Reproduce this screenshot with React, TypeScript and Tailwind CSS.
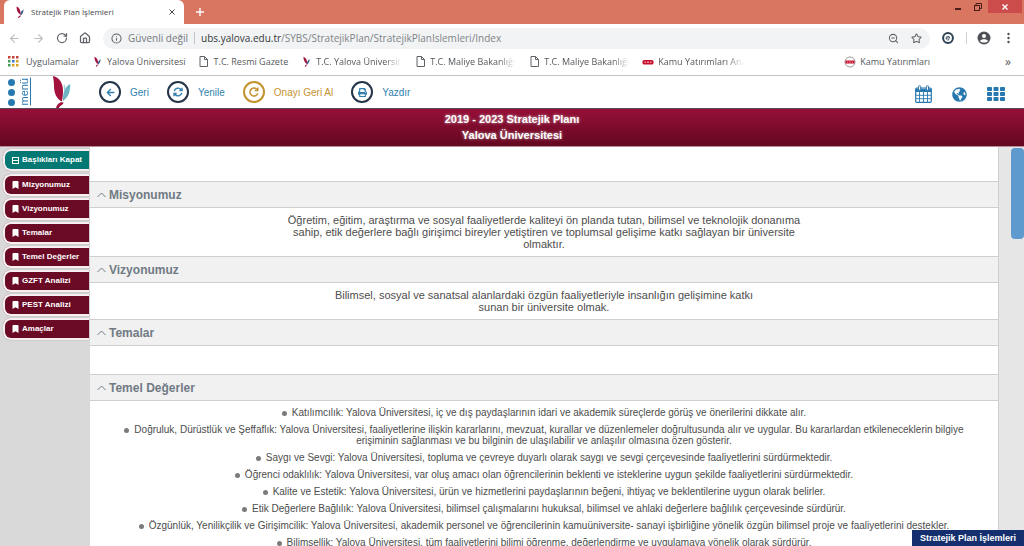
import React, { useState } from 'react';
import { FaArrowLeft, FaBookmark, FaPrint, FaGlobeAmericas } from 'react-icons/fa';
import { ArrowLeft, ArrowRight, House, Info, RotateCw, Star, ZoomOut } from 'lucide-react';

type BookmarkIcon = 'yalova' | 'page' | 'badge' | 'badgeRound';

interface Bookmark {
  icon: BookmarkIcon;
  label: string;
  fade?: boolean;
  className?: string;
}

interface PlanSection {
  title: string;
  text?: string;
  textClass?: string;
  items?: string[];
}

const bookmarks: Bookmark[] = [
  { icon: 'yalova', label: 'Yalova Üniversitesi' },
  { icon: 'page', label: 'T.C. Resmi Gazete' },
  { icon: 'yalova', label: 'T.C. Yalova Üniversite', fade: true },
  { icon: 'page', label: 'T.C. Maliye Bakanlığı', fade: true },
  { icon: 'page', label: 'T.C. Maliye Bakanlığı', fade: true },
  { icon: 'badge', label: 'Kamu Yatırımları Ana', fade: true },
  { icon: 'badgeRound', label: 'Kamu Yatırımları', className: 'ml-[88px]' },
];

const menuItems = ['Mizyonumuz', 'Vizyonumuz', 'Temalar', 'Temel Değerler', 'GZFT Analizi', 'PEST Analizi', 'Amaçlar'];

const sections: PlanSection[] = [
  {
    title: 'Misyonumuz',
    text: 'Öğretim, eğitim, araştırma ve sosyal faaliyetlerde kaliteyi ön planda tutan, bilimsel ve teknolojik donanıma sahip, etik değerlere bağlı girişimci bireyler yetiştiren ve toplumsal gelişime katkı sağlayan bir üniversite olmaktır.',
    textClass: 'max-w-[520px]',
  },
  {
    title: 'Vizyonumuz',
    text: 'Bilimsel, sosyal ve sanatsal alanlardaki özgün faaliyetleriyle insanlığın gelişimine katkı sunan bir üniversite olmak.',
    textClass: 'max-w-[430px]',
  },
  { title: 'Temalar' },
  {
    title: 'Temel Değerler',
    items: [
      'Katılımcılık: Yalova Üniversitesi, iç ve dış paydaşlarının idari ve akademik süreçlerde görüş ve önerilerini dikkate alır.',
      'Doğruluk, Dürüstlük ve Şeffaflık: Yalova Üniversitesi, faaliyetlerine ilişkin kararlarını, mevzuat, kurallar ve düzenlemeler doğrultusunda alır ve uygular. Bu kararlardan etkileneceklerin bilgiye erişiminin sağlanması ve bu bilginin de ulaşılabilir ve anlaşılır olmasına özen gösterir.',
      'Saygı ve Sevgi: Yalova Üniversitesi, topluma ve çevreye duyarlı olarak saygı ve sevgi çerçevesinde faaliyetlerini sürdürmektedir.',
      'Öğrenci odaklılık: Yalova Üniversitesi, var oluş amacı olan öğrencilerinin beklenti ve isteklerine uygun şekilde faaliyetlerini sürdürmektedir.',
      'Kalite ve Estetik: Yalova Üniversitesi, ürün ve hizmetlerini paydaşlarının beğeni, ihtiyaç ve beklentilerine uygun olarak belirler.',
      'Etik Değerlere Bağlılık: Yalova Üniversitesi, bilimsel çalışmalarını hukuksal, bilimsel ve ahlaki değerlere bağlılık çerçevesinde sürdürür.',
      'Özgünlük, Yenilikçilik ve Girişimcilik: Yalova Üniversitesi, akademik personel ve öğrencilerinin kamuüniversite- sanayi işbirliğine yönelik özgün bilimsel proje ve faaliyetlerini destekler.',
      'Bilimsellik: Yalova Üniversitesi, tüm faaliyetlerini bilimi öğrenme, değerlendirme ve uygulamaya yönelik olarak sürdürür.',
    ],
  },
];

function YalovaLogo({ className }: { className: string }) {
  return (
    <svg viewBox="0 0 18 32" className={className} aria-hidden="true">
      <path d="M0.300 0 C7 1.500 10.500 7 10.500 15 C10.500 19 10 22 9.500 25.500 C4 23 1.500 17 1.500 10 C1.500 6 1 3 0.300 0 Z" fill="#a3123c" />
      <path d="M17.700 8 C18 16 15.500 21.500 10.500 25 C10 17 12.500 10 17.700 8 Z" fill="#6db5c4" />
      <path d="M11.500 8 C12.800 10 12.800 12 11.800 15 C11.300 12 11 10 11.500 8 Z" fill="#8fc6d2" />
      <path d="M3.500 32 C4.500 28 7.500 25.500 11 26.500 C10.500 29.500 7.500 29 6.500 32 Z" fill="#a3123c" />
    </svg>
  );
}

function Favicon({ className }: { className: string }) {
  return (
    <svg viewBox="0 0 8 12" className={className} aria-hidden="true">
      <path d="M0.500 0.500 C3.500 1.500 4.800 4.500 4.800 9 C2 7.500 0.500 4.500 0.500 0.500 Z" fill="#a3123c" />
      <path d="M7.500 3.500 C7.500 6.500 6.500 8.500 4.500 9.500 C4.200 6.500 5.500 4.500 7.500 3.500 Z" fill="#3e5f8f" />
      <path d="M2 12 C2.500 10 3.500 9.300 5 9.500 C4.800 10.800 3.500 10.500 3 12 Z" fill="#a3123c" />
    </svg>
  );
}

function BookmarkGlyph({ icon }: { icon: BookmarkIcon }) {
  switch (icon) {
    case 'yalova':
      return <Favicon className="h-[11px] w-[7px]" />;
    case 'page':
      return (
        <svg viewBox="0 0 9 11" className="h-[11px] w-[9px]" fill="none" stroke="#5f6368" aria-hidden="true">
          <path d="M1 0.500 H5.500 L8.500 3.500 V10.500 H1 Z" />
          <path d="M5.500 0.500 V3.500 H8.500" />
        </svg>
      );
    case 'badge':
      return (
        <svg viewBox="0 0 12 12" className="size-3" aria-hidden="true">
          <rect x="0.500" y="4" width="11" height="4.500" rx="1.500" fill="#c8102e" />
          <path d="M2.500 6.200 h1.500 M5 6.200 h2 M8 6.200 h1.500" stroke="#fff" strokeWidth="0.800" />
        </svg>
      );
    default:
      return (
        <svg viewBox="0 0 12 12" className="size-3" aria-hidden="true">
          <circle cx="6" cy="6" r="5" fill="#fff" stroke="#8a8a8a" strokeWidth="0.900" />
          <rect x="1.500" y="4.500" width="9" height="3" fill="#c8102e" />
          <path d="M3 6 h1.200 M5.200 6 h1.600 M7.800 6 h1.200" stroke="#fff" strokeWidth="0.600" />
        </svg>
      );
  }
}

function TitleBar() {
  return (
    <div className="flex h-6 justify-between bg-[#d97662] pl-1">
      <div className="flex">
        <div className="flex w-[180px] items-center rounded-t-md bg-white pr-1 pl-3">
          <Favicon className="h-3 w-2" />
          <span className="ml-[7px] flex-1 whitespace-nowrap text-[8px] text-[#45484c]">Stratejik Plan İşlemleri</span>
          <button aria-label="Sekmeyi kapat" className="flex size-4 items-center justify-center">
            <svg viewBox="0 0 6 6" className="size-[6px]" stroke="#45484c" aria-hidden="true">
              <path d="M0.500 0.500 L5.500 5.500 M5.500 0.500 L0.500 5.500" />
            </svg>
          </button>
        </div>
        <button aria-label="Yeni sekme" className="ml-2 flex w-4 items-center justify-center">
          <svg viewBox="0 0 8 8" className="size-2" stroke="#fff" strokeWidth="1.400" aria-hidden="true">
            <path d="M4 0 V8 M0 4 H8" />
          </svg>
        </button>
      </div>
      <div className="flex h-[13px] items-center pr-[2px]">
        <button aria-label="Simge durumuna küçült" className="flex h-full w-5 items-center justify-center">
          <span className="mt-1 h-[2px] w-[6px] bg-[#4a1d18]" />
        </button>
        <button aria-label="Önceki boyut" className="flex h-full w-5 items-center justify-center">
          <svg viewBox="0 0 8 8" className="size-2" fill="none" stroke="#4a1d18" aria-hidden="true">
            <path d="M2 2 V0.500 H7.500 V5.500 H6" />
            <rect x="0.500" y="2.500" width="5" height="5" />
          </svg>
        </button>
        <button aria-label="Kapat" className="flex h-full w-[34px] items-center justify-center bg-[#cc4b4b]">
          <svg viewBox="0 0 6 6" className="size-[6px]" stroke="#fff" strokeWidth="1.400" aria-hidden="true">
            <path d="M0.500 0.500 L5.500 5.500 M5.500 0.500 L0.500 5.500" />
          </svg>
        </button>
      </div>
    </div>
  );
}

function AddressBar() {
  return (
    <div className="flex h-7 items-center bg-white pl-2 text-[#5f6368]">
      <div className="flex items-center gap-[11px]">
        <button aria-label="Geri git" className="text-[#babcbe]"><ArrowLeft size={13} strokeWidth={2} /></button>
        <button aria-label="İleri git" className="text-[#babcbe]"><ArrowRight size={13} strokeWidth={2} /></button>
        <button aria-label="Sayfayı yenile"><RotateCw size={12} strokeWidth={2.5} /></button>
        <button aria-label="Ana sayfa"><House size={12} strokeWidth={2.5} /></button>
      </div>
      <div className="ml-3 flex h-[21px] flex-1 items-center rounded-full bg-[#f1f3f4] pr-2 pl-2 text-[10px]">
        <Info size={11} strokeWidth={2.2} />
        <span className="ml-[6px] border-r border-[#c3c5c8] pr-[6px] leading-3 text-[#75797d]">Güvenli değil</span>
        <label htmlFor="url" className="ml-[6px] text-[#35373a]">ubs.yalova.edu.tr</label>
        <input
          id="url"
          className="min-w-0 flex-1 bg-transparent text-[#7f8387] outline-none"
          defaultValue="/SYBS/StratejikPlan/StratejikPlanIslemleri/Index"
        />
        <button aria-label="Yakınlaştırma"><ZoomOut size={11} strokeWidth={2.2} /></button>
        <button aria-label="Yer işareti ekle" className="ml-3"><Star size={11} strokeWidth={2.2} /></button>
      </div>
      <button aria-label="Uzantı" className="ml-3">
        <svg viewBox="0 0 12 12" className="size-3" aria-hidden="true">
          <circle cx="6" cy="6" r="4.900" fill="#fff" stroke="#2c4257" strokeWidth="2" />
          <path d="M4.300 6 H7.700 A1.800 1.800 0 1 0 7.200 7.400" fill="none" stroke="#2c4257" strokeWidth="0.900" />
        </svg>
      </button>
      <span className="ml-3 h-3 w-px bg-[#cfd1d4]" />
      <button aria-label="Profil" className="ml-[10px]">
        <svg viewBox="0 0 14 14" className="size-[14px]" aria-hidden="true">
          <circle cx="7" cy="7" r="6.500" fill="#4d5156" />
          <circle cx="7" cy="5" r="2" fill="#fff" />
          <path d="M3 10 C4 7.600 10 7.600 11 10 C9.500 12 4.500 12 3 10 Z" fill="#fff" />
        </svg>
      </button>
      <button aria-label="Diğer" className="mr-[14px] ml-4">
        <svg viewBox="0 0 3 12" className="h-3 w-[3px]" fill="#4d5156" aria-hidden="true">
          <circle cx="1.500" cy="2" r="1.200" />
          <circle cx="1.500" cy="6" r="1.200" />
          <circle cx="1.500" cy="10" r="1.200" />
        </svg>
      </button>
    </div>
  );
}

function AppsGlyph() {
  const colors = ['#c5443a', '#c5443a', '#c5443a', '#4b9b58', '#3f78c9', '#d9a521', '#4b9b58', '#d9a521', '#d9a521'];
  return (
    <svg viewBox="0 0 11 11" className="size-[11px]" aria-hidden="true">
      {colors.map((c, i) => (
        <rect key={i} x={(i % 3) * 4} y={Math.floor(i / 3) * 4} width="2.500" height="2.500" fill={c} />
      ))}
    </svg>
  );
}

function BookmarksBar() {
  return (
    <nav className="flex h-6 items-center gap-3 border-b border-[#c4c4c6] bg-white pb-1 pl-2 text-[9px] whitespace-nowrap text-[#55585c]">
      <a href="#uygulamalar" className="flex items-center gap-[7px]">
        <AppsGlyph />
        Uygulamalar
      </a>
      {bookmarks.map((b, i) => (
        <a key={i} href="#bookmark" className={`flex items-center gap-1 ${b.className ?? ''}`}>
          <span className="flex w-3 shrink-0 justify-center">
            <BookmarkGlyph icon={b.icon} />
          </span>
          <span className={b.fade ? 'w-[86px] [mask-image:linear-gradient(to_right,black_80%,transparent)]' : ''}>
            {b.label}
          </span>
        </a>
      ))}
      <button aria-label="Diğer yer işaretleri" className="mr-[13px] ml-auto text-[12px] leading-3">»</button>
    </nav>
  );
}

interface RoundButtonProps {
  label: string;
  gold?: boolean;
  children: React.ReactNode;
}

function RoundButton({ label, gold, children }: RoundButtonProps) {
  return (
    <button className={`flex items-center gap-[9px] ${gold ? 'text-[#c4922f]' : 'text-[#2f7fae]'}`}>
      <span
        className={`flex size-[22px] items-center justify-center rounded-full border-2 ${
          gold ? 'border-[#c4922f]' : 'border-[#24344a]'
        }`}
      >
        {children}
      </span>
      {label}
    </button>
  );
}

function AppToolbar() {
  return (
    <header className="flex h-[33px] shrink-0 items-center border-b border-[#5a4a5e] bg-white pr-[19px] pl-2 text-[10px] text-[#2878b0]">
      <button className="flex items-center gap-1">
        <span className="flex flex-col gap-[3px]">
          <span className="size-[7px] rounded-full bg-[#2878b0]" />
          <span className="size-[7px] rounded-full bg-[#2878b0]" />
          <span className="size-[7px] rounded-full bg-[#2878b0]" />
        </span>
        <span className="rotate-180 border-l border-[#2878b0] text-[11px] leading-[11px] [writing-mode:vertical-rl]">menü</span>
      </button>
      <YalovaLogo className="ml-[21px] h-8 w-[19px]" />
      <div className="ml-7 flex gap-[18px]">
        <RoundButton label="Geri">
          <FaArrowLeft size={9} />
        </RoundButton>
        <RoundButton label="Yenile">
          <svg viewBox="0 0 10 10" className="size-[10px]" fill="none" stroke="currentColor" strokeWidth="1.400" aria-hidden="true">
            <path d="M1.200 4.200 A3.900 3.900 0 0 1 8 2.500 M9 0.800 V3.500 H6.300" />
            <path d="M8.800 5.800 A3.900 3.900 0 0 1 2 7.500 M1 9.200 V6.500 H3.700" />
          </svg>
        </RoundButton>
        <RoundButton label="Onayı Geri Al" gold>
          <svg viewBox="0 0 10 10" className="size-[10px]" fill="none" stroke="currentColor" strokeWidth="1.500" aria-hidden="true">
            <path d="M8.800 6.200 A4 4 0 1 1 7.800 2.200 M8.800 0.500 V3.500 H5.800" />
          </svg>
        </RoundButton>
        <RoundButton label="Yazdır">
          <FaPrint size={9} />
        </RoundButton>
      </div>
      <div className="ml-auto flex items-center gap-5 pt-1">
        <button aria-label="Takvim">
          <svg viewBox="0 0 17 18" className="h-[18px] w-[17px]" fill="none" stroke="currentColor" aria-hidden="true">
            <rect x="0.700" y="3" width="15.600" height="14.300" rx="1" strokeWidth="1.200" />
            <path d="M1 4.200 H16 V6.500 H1 Z" fill="currentColor" />
            <path d="M4.500 7 V17 M8.500 7 V17 M12.500 7 V17 M1 10.300 H16 M1 13.700 H16" strokeWidth="0.900" />
            <rect x="3.500" y="0.700" width="2.200" height="4.500" rx="1" fill="#fff" />
            <rect x="11.300" y="0.700" width="2.200" height="4.500" rx="1" fill="#fff" />
          </svg>
        </button>
        <button aria-label="Dil">
          <FaGlobeAmericas size={15} />
        </button>
        <button aria-label="Modüller">
          <svg viewBox="0 0 18 14" className="h-[14px] w-[18px]" fill="currentColor" aria-hidden="true">
            {[0, 1, 2].map((r) =>
              [0, 1, 2].map((c) => (
                <rect key={`${r}${c}`} x={c * 6.500} y={r * 5} width="5" height="4" rx="0.800" />
              ))
            )}
          </svg>
        </button>
      </div>
    </header>
  );
}

function SideMenu({ onToggleAll }: { onToggleAll: () => void }) {
  const itemClass =
    'flex h-[22px] items-center gap-[3px] rounded-l-lg border-2 border-r-0 border-[#f6eef0] pl-[7px] whitespace-nowrap text-white shadow-[0_0_1px_rgba(110,60,80,0.7)]';
  return (
    <aside className="flex w-[90px] shrink-0 flex-col gap-[2px] bg-[#d9d9d9] pt-[2px] pr-px pl-[3px] text-[8px] font-bold">
      <button className={`${itemClass} mb-px bg-[#047873]`} onClick={onToggleAll}>
        <svg viewBox="0 0 7 7" className="size-[7px]" fill="none" stroke="#fff" aria-hidden="true">
          <rect x="0.500" y="0.500" width="6" height="6" />
          <path d="M0.500 3.500 H6.500" />
        </svg>
        Başlıkları Kapat
      </button>
      {menuItems.map((m) => (
        <a key={m} href={`#${m}`} className={`${itemClass} bg-[#6b0a25]`}>
          <FaBookmark size={8} className="w-[7px]" />
          {m}
        </a>
      ))}
    </aside>
  );
}

interface SectionProps {
  section: PlanSection;
  open: boolean;
  onToggle: () => void;
}

function Section({ section, open, onToggle }: SectionProps) {
  return (
    <section>
      <h2 className="border-y border-[#cfcfcf] bg-[#f1f1f1]">
        <button className="flex h-[25px] w-full items-center gap-[3px] pl-[7px] text-[12px] font-bold text-[#707a84]" onClick={onToggle}>
          <svg viewBox="0 0 9 6" className={open ? 'h-[6px] w-[9px]' : 'h-[6px] w-[9px] rotate-180'} fill="none" stroke="#707a84" aria-hidden="true">
            <path d="M0.500 5 L4.500 1 L8.500 5" />
          </svg>
          {section.title}
        </button>
      </h2>
      {open && (
        <div className="min-h-7 py-[6px] text-center text-[#4d4d4d]">
          {section.text && <p className={`mx-auto text-[11px] leading-3 ${section.textClass ?? ''}`}>{section.text}</p>}
          {section.items && (
            <ul className="mx-auto flex max-w-[870px] flex-col gap-[6px] text-[10px] leading-[11px]">
              {section.items.map((item) => (
                <li key={item}>
                  <span className="mr-[5px] inline-block size-[5px] rounded-full bg-[#7b7b7b]" />
                  {item}
                </li>
              ))}
            </ul>
          )}
        </div>
      )}
    </section>
  );
}

export default function App() {
  const [closed, setClosed] = useState<string[]>([]);

  const toggle = (title: string) =>
    setClosed((prev) => (prev.includes(title) ? prev.filter((t) => t !== title) : [...prev, title]));

  const toggleAll = () => setClosed((prev) => (prev.length ? [] : sections.map((s) => s.title)));

  return (
    <div className="flex h-screen flex-col overflow-hidden bg-white font-['Liberation_Sans',sans-serif]">
      {/* Browser chrome */}
      <div className="shrink-0 font-['Open_Sans',sans-serif]">
        <TitleBar />
        <AddressBar />
        <BookmarksBar />
      </div>

      <AppToolbar />
      <h1 className="shrink-0 border-b border-[#b98a9a] bg-linear-to-b from-[#960f38] to-[#640820] pt-[2px] pb-[3px] text-center text-[11px] leading-4 font-bold text-white [text-shadow:0_0_3px_rgba(255,255,255,0.7)]">
        2019 - 2023 Stratejik Planı
        <br />
        Yalova Üniversitesi
      </h1>

      <div className="flex min-h-0 flex-1">
        <SideMenu onToggleAll={toggleAll} />
        <main className="min-w-0 flex-1 overflow-hidden border-r border-[#cfcfcf] bg-white pt-[34px]">
          {sections.map((s) => (
            <Section key={s.title} section={s} open={!closed.includes(s.title)} onToggle={() => toggle(s.title)} />
          ))}
        </main>
        {/* Scroll track */}
        <div className="flex w-[25px] shrink-0 justify-end bg-[#e6e6e6] pt-px">
          <div className="h-[91px] w-[13px] rounded-sm bg-[#5f9ace]" />
        </div>
      </div>

      <footer className="fixed right-0 bottom-0 bg-[#152f6e] px-2 text-[9px] leading-4 font-bold text-white">
        Stratejik Plan İşlemleri
      </footer>
    </div>
  );
}
